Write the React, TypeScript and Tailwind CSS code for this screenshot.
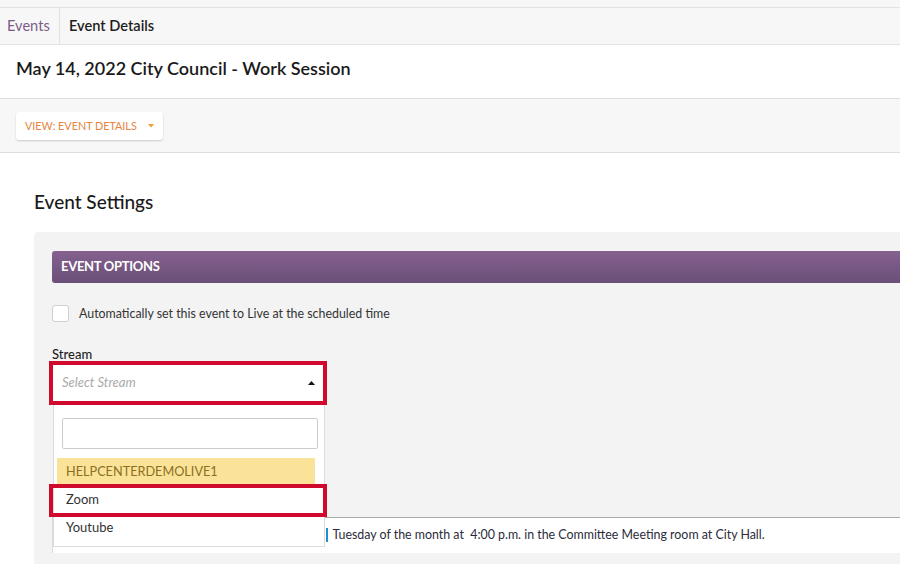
export default function App() {
  return (
    <div className="h-[564px] w-[900px] overflow-hidden bg-white text-[#333] [font-family:Lato,'Noto_Sans',sans-serif]">
      <div className="h-[7px] bg-[#f7f7f7]" />
      <div className="flex h-[38px] border-y border-[#e2e2e2] bg-[#f7f7f7] text-[14.6px] leading-[20px]">
        <div className="flex w-[60px] items-center border-r border-[#e2e2e2] pb-[1px] pl-[7px] text-[#7b5c89]">Events</div>
        <div className="flex items-center pb-[1px] pl-[9px] font-semibold text-[#1d1d1d]">Event Details</div>
      </div>

      <div className="h-[54px] border-b border-[#dedede] pl-[16px] pt-[11px]">
        <h1 className="text-[18px] font-semibold leading-[24px] text-[#1a1a1a]">May 14, 2022 City Council - Work Session</h1>
      </div>

      <div className="h-[54px] border-b border-[#dedede] bg-[#f7f7f7] pl-[16px] pt-[13px]">
        <button className="flex h-[28px] w-[147px] items-center justify-between rounded-[3px] bg-white pl-[9px] pr-[9px] shadow-[0_1px_2px_rgba(0,0,0,0.18)]">
          <span className="text-[10.8px] text-[#e8843c]">VIEW: EVENT DETAILS</span>
          <svg width="6" height="4" viewBox="0 0 6 4">
            <path d="M0 0 L6 0 L3 3.5 Z" fill="#f0a030" />
          </svg>
        </button>
      </div>

      <h2 className="mt-[36px] pl-[34px] text-[19px] font-medium leading-[26px] text-[#1a1a1a]">Event Settings</h2>

      <div className="ml-[34px] mt-[17px] h-[400px] rounded-tl-[4px] bg-[#f3f3f3] pl-[18px] pt-[19px]">
        <div className="flex h-[32px] items-center rounded-l-[3px] bg-gradient-to-b from-[#85618f] to-[#6a4f78] pl-[9px]">
          <span className="text-[13px] font-bold tracking-[-0.3px] text-white">EVENT OPTIONS</span>
        </div>

        <label className="mt-[21px] flex items-center gap-[10px]">
          <span className="h-[17px] w-[17px] rounded-[3px] border border-[#cfcfcf] bg-white" />
          <span className="pt-[1px] text-[12.4px] text-[#333]">Automatically set this event to Live at the scheduled time</span>
        </label>

        <div className="mt-[23px] text-[13px] font-medium leading-[14px] text-[#1f1f1f]">Stream</div>

        <div className="relative z-10 -ml-[3px] w-[278px]">
          <div className="flex h-[44px] items-center justify-between border-[4px] border-[#cf0a2c] bg-white pl-[9px] pr-[8px]">
            <span className="text-[13px] italic text-[#aaa]">Select Stream</span>
            <svg width="7" height="4" viewBox="0 0 7 4">
              <path d="M0 4 L7 4 L3.5 0 Z" fill="#111" />
            </svg>
          </div>

          <div className="absolute left-[4px] top-[44px] h-[142px] w-[272px] border border-t-0 border-[#dcdcdc] bg-white px-[3px] pt-[13px]">
            <div className="ml-[5px] h-[31px] w-[256px] rounded-[2px] border border-[#cccccc] bg-white" />
            <div className="mt-[9px] flex h-[28px] w-[258px] items-center bg-[#fae398] pl-[9px] text-[12.7px] text-[#8c6f1e]">
              HELPCENTERDEMOLIVE1
            </div>
            <div className="relative flex h-[28px] w-[258px] items-center pl-[9px] text-[13px] text-[#333]">
              Zoom
              <div className="absolute -left-[8px] -top-[2px] h-[33px] w-[278px] border-[4px] border-[#cf0a2c]" />
            </div>
            <div className="flex h-[28px] w-[258px] items-center pl-[9px] text-[13px] text-[#333]">Youtube</div>
          </div>
        </div>

        <div className="mt-[112px] flex h-[36px] items-center border-l border-t border-l-[#dcdcdc] border-t-[#a8a8a8] bg-white pl-[273px] text-[12.4px] text-[#2b2b3a]">
          <span className="mr-[5px] h-[14px] w-[1.5px] bg-[#1e8fd6]" />
          <span>Tuesday of the month at&nbsp; 4:00 p.m. in the Committee Meeting room at City Hall.</span>
        </div>
      </div>
    </div>
  )
}
